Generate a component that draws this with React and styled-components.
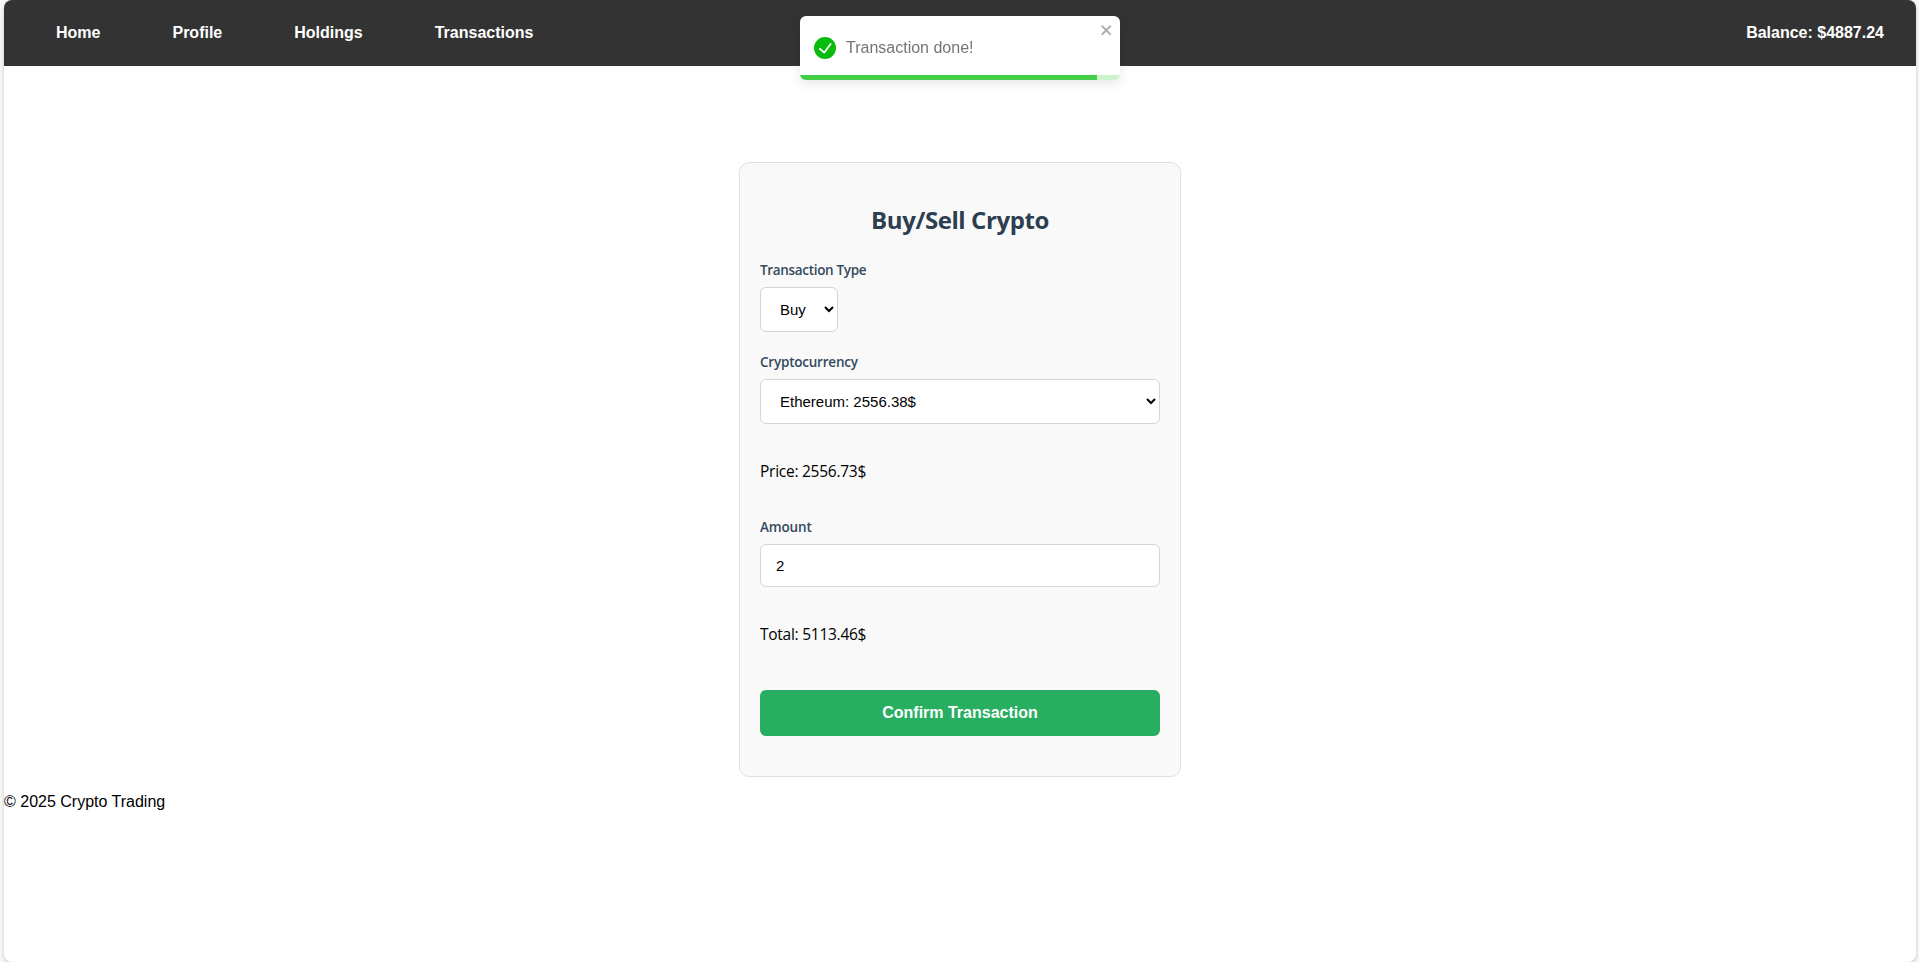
import React from "react";
import styled, { createGlobalStyle } from "styled-components";

const GlobalStyle = createGlobalStyle`
  * { box-sizing: border-box; }
  html { overflow: hidden; }
  body {
    margin: 0;
    background: #f8f8f8;
    color: #000;
    font-family: "Liberation Sans", Arial, sans-serif;
    font-size: 16px;
  }
`;

const Shell = styled.div`
  height: 962px;
  margin: 0 3px 0 4px;
  overflow: hidden;
  background: #fff;
  border-radius: 8px;
  box-shadow: 0 2px 4px rgba(0, 0, 0, 0.2);
`;

const NavBar = styled.header`
  display: flex;
  align-items: center;
  justify-content: space-between;
  height: 66px;
  padding: 0 32px 0 52px;
  background: #333;
  color: #fff;
  font-weight: 700;
`;

const NavLinks = styled.nav`
  display: flex;
  gap: 72px;
`;

const NavLink = styled.a`
  color: inherit;
  text-decoration: none;
`;

const Balance = styled.span``;

const Main = styled.main`
  display: flex;
  justify-content: center;
  padding-top: 96px;
`;

const Card = styled.form`
  display: flex;
  flex-direction: column;
  width: 442px;
  padding: 41px 20px 40px;
  background: #f9f9f9;
  border: 1px solid #e0e0e0;
  border-radius: 10px;
  font-family: "Segoe UI", "Open Sans", sans-serif;
`;

const Title = styled.h2`
  margin: 0 0 24px;
  color: #2c3e50;
  font-size: 24px;
  line-height: 32px;
  font-weight: 700;
  letter-spacing: -0.42px;
  text-align: center;
`;

const Field = styled.div`
  display: flex;
  flex-direction: column;
  align-items: flex-start;
  gap: 7px;
  & + & { margin-top: 20px; }
`;

const Label = styled.label`
  color: #34495e;
  font-size: 13.5px;
  line-height: 20px;
  font-weight: 600;
  letter-spacing: ${(p) => p.$tracking};
`;

const Select = styled.select`
  width: ${(p) => p.$width};
  height: 45px;
  padding: 0 0 0 15px;
  background: #fff;
  border: 1px solid #d5d5d5;
  border-radius: 6px;
  color: #000;
  font: 15px "Liberation Sans", Arial, sans-serif;
`;

const Input = styled.input`
  width: 100%;
  height: 43px;
  padding: 0 15px;
  background: #fff;
  border: 1px solid #d5d5d5;
  border-radius: 6px;
  color: #000;
  font: 15px "Liberation Sans", Arial, sans-serif;
`;

const Amount = styled.p`
  margin: 35px 0 ${(p) => p.$after};
  font-size: 15.5px;
  line-height: 24px;
  letter-spacing: -0.26px;
`;

const ConfirmButton = styled.button`
  height: 46px;
  padding: 0 0 1px;
  background: #27ae60;
  border: 0;
  border-radius: 6px;
  color: #fff;
  font: 700 16px "Liberation Sans", Arial, sans-serif;
`;

const Footer = styled.footer`
  margin-top: 16px;
  line-height: 18px;
`;

const Toast = styled.div`
  position: fixed;
  top: 16px;
  left: 800px;
  display: flex;
  align-items: center;
  width: 320px;
  height: 64px;
  padding: 0 14px;
  overflow: hidden;
  background: #fff;
  border-radius: 6px;
  box-shadow: 0 4px 12px rgba(0, 0, 0, 0.1);
  color: #757575;
`;

const ToastIcon = styled.svg`
  width: 22px;
  height: 22px;
  margin-right: 10px;
  fill: #07bc0c;
`;

const ToastText = styled.span`
  line-height: 18px;
  padding-bottom: 1px;
`;

const CloseButton = styled.button`
  position: absolute;
  top: 6px;
  right: 6px;
  display: flex;
  padding: 0;
  background: transparent;
  border: 0;
  color: #000;
  opacity: 0.3;
  svg { width: 14px; height: 16px; fill: currentColor; }
`;

const ProgressTrack = styled.div`
  position: absolute;
  left: 0;
  right: 0;
  bottom: 0;
  height: 5px;
  background: #cdf2ce;
`;

const ProgressFill = styled.div`
  width: 297px;
  height: 5px;
  background: #43ce47;
`;

const links = ["Home", "Profile", "Holdings", "Transactions"];

export default function App() {
  return (
    <>
      <GlobalStyle />
      <Shell>
        <NavBar>
          <NavLinks>
            {links.map((name) => (
              <NavLink key={name} href="#">{name}</NavLink>
            ))}
          </NavLinks>
          <Balance>Balance: $4887.24</Balance>
        </NavBar>
        <Main>
          <Card>
            <Title>Buy/Sell Crypto</Title>
            <Field>
              <Label htmlFor="type" $tracking="-0.32px">Transaction Type</Label>
              <Select id="type" $width="78px" defaultValue="buy">
                <option value="buy">Buy</option>
              </Select>
            </Field>
            <Field>
              <Label htmlFor="coin" $tracking="-0.22px">Cryptocurrency</Label>
              <Select id="coin" $width="100%" defaultValue="eth">
                <option value="eth">Ethereum: 2556.38$</option>
              </Select>
            </Field>
            <Amount $after="34px">Price: 2556.73$</Amount>
            <Field>
              <Label htmlFor="amount" $tracking="-0.15px">Amount</Label>
              <Input id="amount" defaultValue="2" />
            </Field>
            <Amount $after="44px">Total: 5113.46$</Amount>
            <ConfirmButton type="button">Confirm Transaction</ConfirmButton>
          </Card>
        </Main>
        <Footer>© 2025 Crypto Trading</Footer>
      </Shell>
      <Toast role="alert">
        <ToastIcon viewBox="0 0 24 24">
          <path d="M12 0a12 12 0 1012 12A12.014 12.014 0 0012 0zm6.927 8.2l-6.845 9.289a1.011 1.011 0 01-1.43.188l-4.888-3.908a1 1 0 111.25-1.562l4.076 3.261 6.227-8.451a1 1 0 111.61 1.183z" />
        </ToastIcon>
        <ToastText>Transaction done!</ToastText>
        <CloseButton type="button" aria-label="close">
          <svg viewBox="0 0 14 16">
            <path fillRule="evenodd" d="M7.71 8.23l3.75 3.75-1.48 1.48-3.75-3.75-3.75 3.75L1 11.98l3.75-3.75L1 4.48 2.48 3l3.75 3.75L9.98 3l1.48 1.48-3.75 3.75z" />
          </svg>
        </CloseButton>
        <ProgressTrack>
          <ProgressFill />
        </ProgressTrack>
      </Toast>
    </>
  );
}
